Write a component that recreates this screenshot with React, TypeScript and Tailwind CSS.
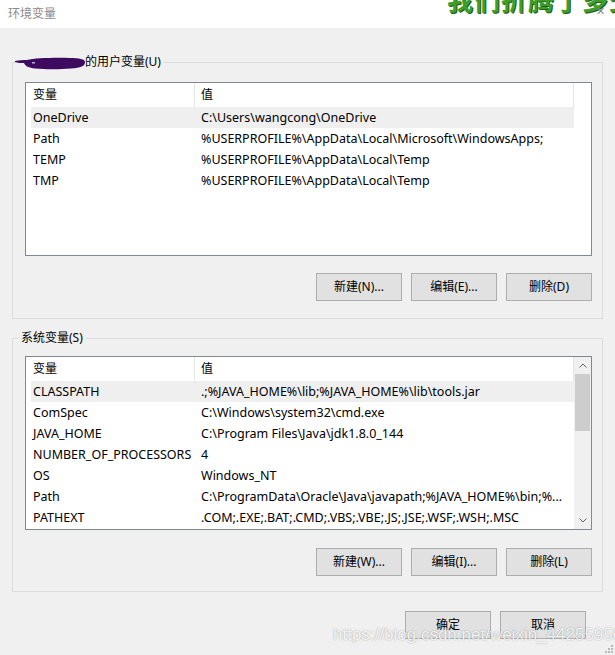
import React from 'react';

type Row = [string, string];

const userVars: Row[] = [
  ['OneDrive', 'C:\\Users\\wangcong\\OneDrive'],
  ['Path', '%USERPROFILE%\\AppData\\Local\\Microsoft\\WindowsApps;'],
  ['TEMP', '%USERPROFILE%\\AppData\\Local\\Temp'],
  ['TMP', '%USERPROFILE%\\AppData\\Local\\Temp'],
];

const sysVars: Row[] = [
  ['CLASSPATH', '.;%JAVA_HOME%\\lib;%JAVA_HOME%\\lib\\tools.jar'],
  ['ComSpec', 'C:\\Windows\\system32\\cmd.exe'],
  ['JAVA_HOME', 'C:\\Program Files\\Java\\jdk1.8.0_144'],
  ['NUMBER_OF_PROCESSORS', '4'],
  ['OS', 'Windows_NT'],
  ['Path', 'C:\\ProgramData\\Oracle\\Java\\javapath;%JAVA_HOME%\\bin;%...'],
  ['PATHEXT', '.COM;.EXE;.BAT;.CMD;.VBS;.VBE;.JS;.JSE;.WSF;.WSH;.MSC'],
];

function Chevron({ down }: { down?: boolean }) {
  return (
    <svg width="8" height="5" viewBox="0 0 8 5" className={down ? 'rotate-180' : ''}>
      <path d="M0.5 4.5 L4 1 L7.5 4.5" stroke="#606060" strokeWidth="1" fill="none" />
    </svg>
  );
}

function VarList({ rows, scroll }: { rows: Row[]; scroll?: boolean }) {
  return (
    <div className="ml-[7px] mr-[10px] h-[174px] border border-[#828790] bg-white flex">
      <div className="flex-1 min-w-0">
        <div className="flex h-[24px]">
          <div className="w-[168px] pl-[7px] flex items-center">变量</div>
          <div className="flex-1 pl-[6px] flex items-center border-l border-r border-[#e5e5e5]">值</div>
        </div>
        {rows.map((r, i) => (
          <div
            key={r[0]}
            className={`ml-[5px] h-[21px] pt-[2px] flex items-center text-[12.5px] ${i === 0 ? 'bg-[#efefef]' : ''}`}
          >
            <div className="w-[163px] pl-[2px] whitespace-nowrap overflow-hidden">{r[0]}</div>
            <div className="flex-1 pl-[7px] whitespace-nowrap overflow-hidden">{r[1]}</div>
          </div>
        ))}
      </div>
      {scroll ? (
        <div className="w-[17px] bg-[#f0f0f0] flex flex-col">
          <div className="h-[17px] flex items-center justify-center">
            <Chevron />
          </div>
          <div className="mx-[1px] h-[57px] bg-[#cdcdcd]" />
          <div className="flex-1" />
          <div className="h-[17px] flex items-center justify-center">
            <Chevron down />
          </div>
        </div>
      ) : (
        <div className="w-[17px]" />
      )}
    </div>
  );
}

function Btn({ children }: { children: React.ReactNode }) {
  return (
    <button className="w-[86px] h-[28px] bg-[#e1e1e1] border border-[#adadad] text-[12px] text-black flex items-center justify-center">
      {children}
    </button>
  );
}

export default function App() {
  return (
    <div className="relative w-[615px] h-[655px] overflow-hidden bg-[#f0f0f0] text-[12px] text-black font-['Noto_Sans','Noto_Sans_CJK_SC',sans-serif]">
      <div className="h-[28px] bg-white flex items-center pl-[8px] text-[#8a8a8a]">环境变量</div>

      <fieldset className="mx-[12px] mt-[26px] border border-[#dcdcdc] pl-[5px] pb-[17px]">
        <legend className="px-[3px] h-[16px] leading-[16px]">
          <span className="inline-flex items-center">
            <svg width="70" height="13" viewBox="0 0 70 13" className="-ml-[6px] mt-[2px]">
              <path
                d="M0 4 C4 3 8 3 12 3 C20 1 40 0.5 55 1 C64 1 70 2 70 5 C70 9 66 11 56 11.5 C45 12.5 30 12.5 20 11.5 C14 11 10 9 9 6 C6 6 3 6 0 5 Z"
                fill="#3d0a5f"
              />
              <rect x="17" y="5" width="3" height="1.5" fill="#b0b0d0" />
            </svg>
            的用户变量(U)
          </span>
        </legend>
        <div className="mt-[12px]">
          <VarList rows={userVars} />
        </div>
        <div className="mt-[17px] mr-[10px] flex justify-end gap-[9px]">
          <Btn>新建(N)...</Btn>
          <Btn>编辑(E)...</Btn>
          <Btn>删除(D)</Btn>
        </div>
      </fieldset>

      <fieldset className="mx-[12px] mt-[11px] border border-[#dcdcdc] pl-[5px] pb-[15px]">
        <legend className="px-[3px] h-[16px] leading-[16px]">系统变量(S)</legend>
        <div className="mt-[10px]">
          <VarList rows={sysVars} scroll />
        </div>
        <div className="mt-[18px] mr-[10px] flex justify-end gap-[9px]">
          <Btn>新建(W)...</Btn>
          <Btn>编辑(I)...</Btn>
          <Btn>删除(L)</Btn>
        </div>
      </fieldset>

      <div className="mt-[19px] mr-[29px] flex justify-end gap-[9px]">
        <Btn>确定</Btn>
        <Btn>取消</Btn>
      </div>

      {/* overlays from the screenshot: pasted heading, close glyph, watermark, size grip */}
      <div className="absolute left-[447px] top-[-14px] whitespace-nowrap text-[26px] leading-none font-bold tracking-[1px] text-[#3d9e2b] [text-shadow:1px_1px_0_#1f5f15] font-['Noto_Sans_CJK_SC',sans-serif]">
        我们折腾了多少
      </div>
      <div className="absolute left-[596px] top-[5px] text-[11px] leading-none text-[#888]">✕</div>
      <div className="absolute left-[333px] top-[625px] whitespace-nowrap text-[17px] leading-[20px] text-white/85 [text-shadow:0_0_1.5px_rgba(0,0,0,0.4)] font-['Liberation_Sans',Arial,sans-serif]">
        https://blog.csdn.net/weixin_44255950
      </div>
      <svg className="absolute right-[2px] bottom-[2px]" width="8" height="8" viewBox="0 0 8 8">
        <rect x="6" y="0" width="2" height="2" fill="#b8b8b8" />
        <rect x="3" y="3" width="2" height="2" fill="#b8b8b8" />
        <rect x="6" y="3" width="2" height="2" fill="#b8b8b8" />
        <rect x="0" y="6" width="2" height="2" fill="#b8b8b8" />
        <rect x="3" y="6" width="2" height="2" fill="#b8b8b8" />
        <rect x="6" y="6" width="2" height="2" fill="#b8b8b8" />
      </svg>
    </div>
  );
}
